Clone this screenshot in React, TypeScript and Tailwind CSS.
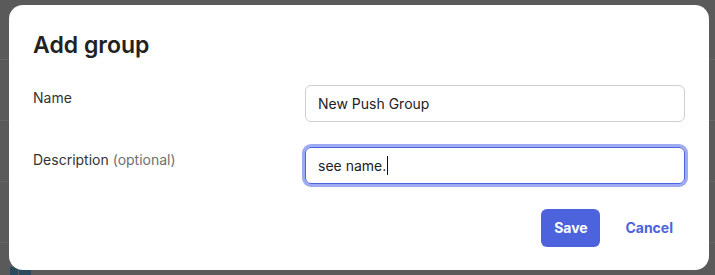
import React, { useState } from "react";

export default function App() {
  const [name, setName] = useState("New Push Group");

  return (
    <div
      className="relative w-[715px] h-[275px] overflow-hidden bg-[#5a5a5a]"
      style={{ fontFamily: "Inter, 'Noto Sans', sans-serif" }}
    >
      {/* page behind the overlay */}
      <div className="flex flex-col">
        <div className="h-[60px] border-b border-[#656565]" />
        <div className="h-[61px] border-b border-[#656565]" />
        <div className="h-[61px] border-b border-[#656565]" />
        <div className="h-[61px] border-b border-[#656565]" />
        <div className="ml-[10px] mt-[24px] flex gap-px">
          <div className="w-[8px] h-[8px] bg-[#2b4a5f]" />
          <div className="w-[12px] h-[8px] bg-[#2b4a5f]" />
        </div>
      </div>

      <div className="absolute left-[9px] top-[5px] w-[700px] h-[265px] bg-white rounded-[14px] px-6 pt-[26px] pb-[23px] flex flex-col">
        <h2 className="text-[23px] leading-7 font-semibold text-[#222]">
          Add group
        </h2>

        <div className="mt-[26px] grid grid-cols-[272px_1fr] gap-y-[25px]">
          <label className="pt-[3px] text-sm leading-5 text-[#333]">Name</label>
          <input
            type="text"
            value={name}
            onChange={(e) => setName(e.target.value)}
            className="h-[37px] w-full px-3 text-sm text-[#222] border border-[#cfcfcf] rounded-md focus:outline-none"
          />

          <label className="pt-[3px] text-sm leading-5 text-[#333]">
            Description <span className="text-[#707070]">(optional)</span>
          </label>
          <div className="h-[37px] w-full px-3 flex items-center text-sm text-[#222] border border-[#4b63dc] rounded-md ring-[3px] ring-[#9eaaf2]">
            <span>see name.</span>
            <span className="ml-px w-px h-[19px] bg-[#111]" />
          </div>
        </div>

        <div className="mt-[25px] flex justify-end items-center gap-[13px]">
          <button
            type="button"
            className="h-[38px] w-[59px] rounded-md bg-[#4c63dd] text-white text-sm font-bold"
          >
            Save
          </button>
          <button
            type="button"
            className="h-[38px] px-3 text-sm font-bold text-[#4c63dd]"
          >
            Cancel
          </button>
        </div>
      </div>
    </div>
  );
}
